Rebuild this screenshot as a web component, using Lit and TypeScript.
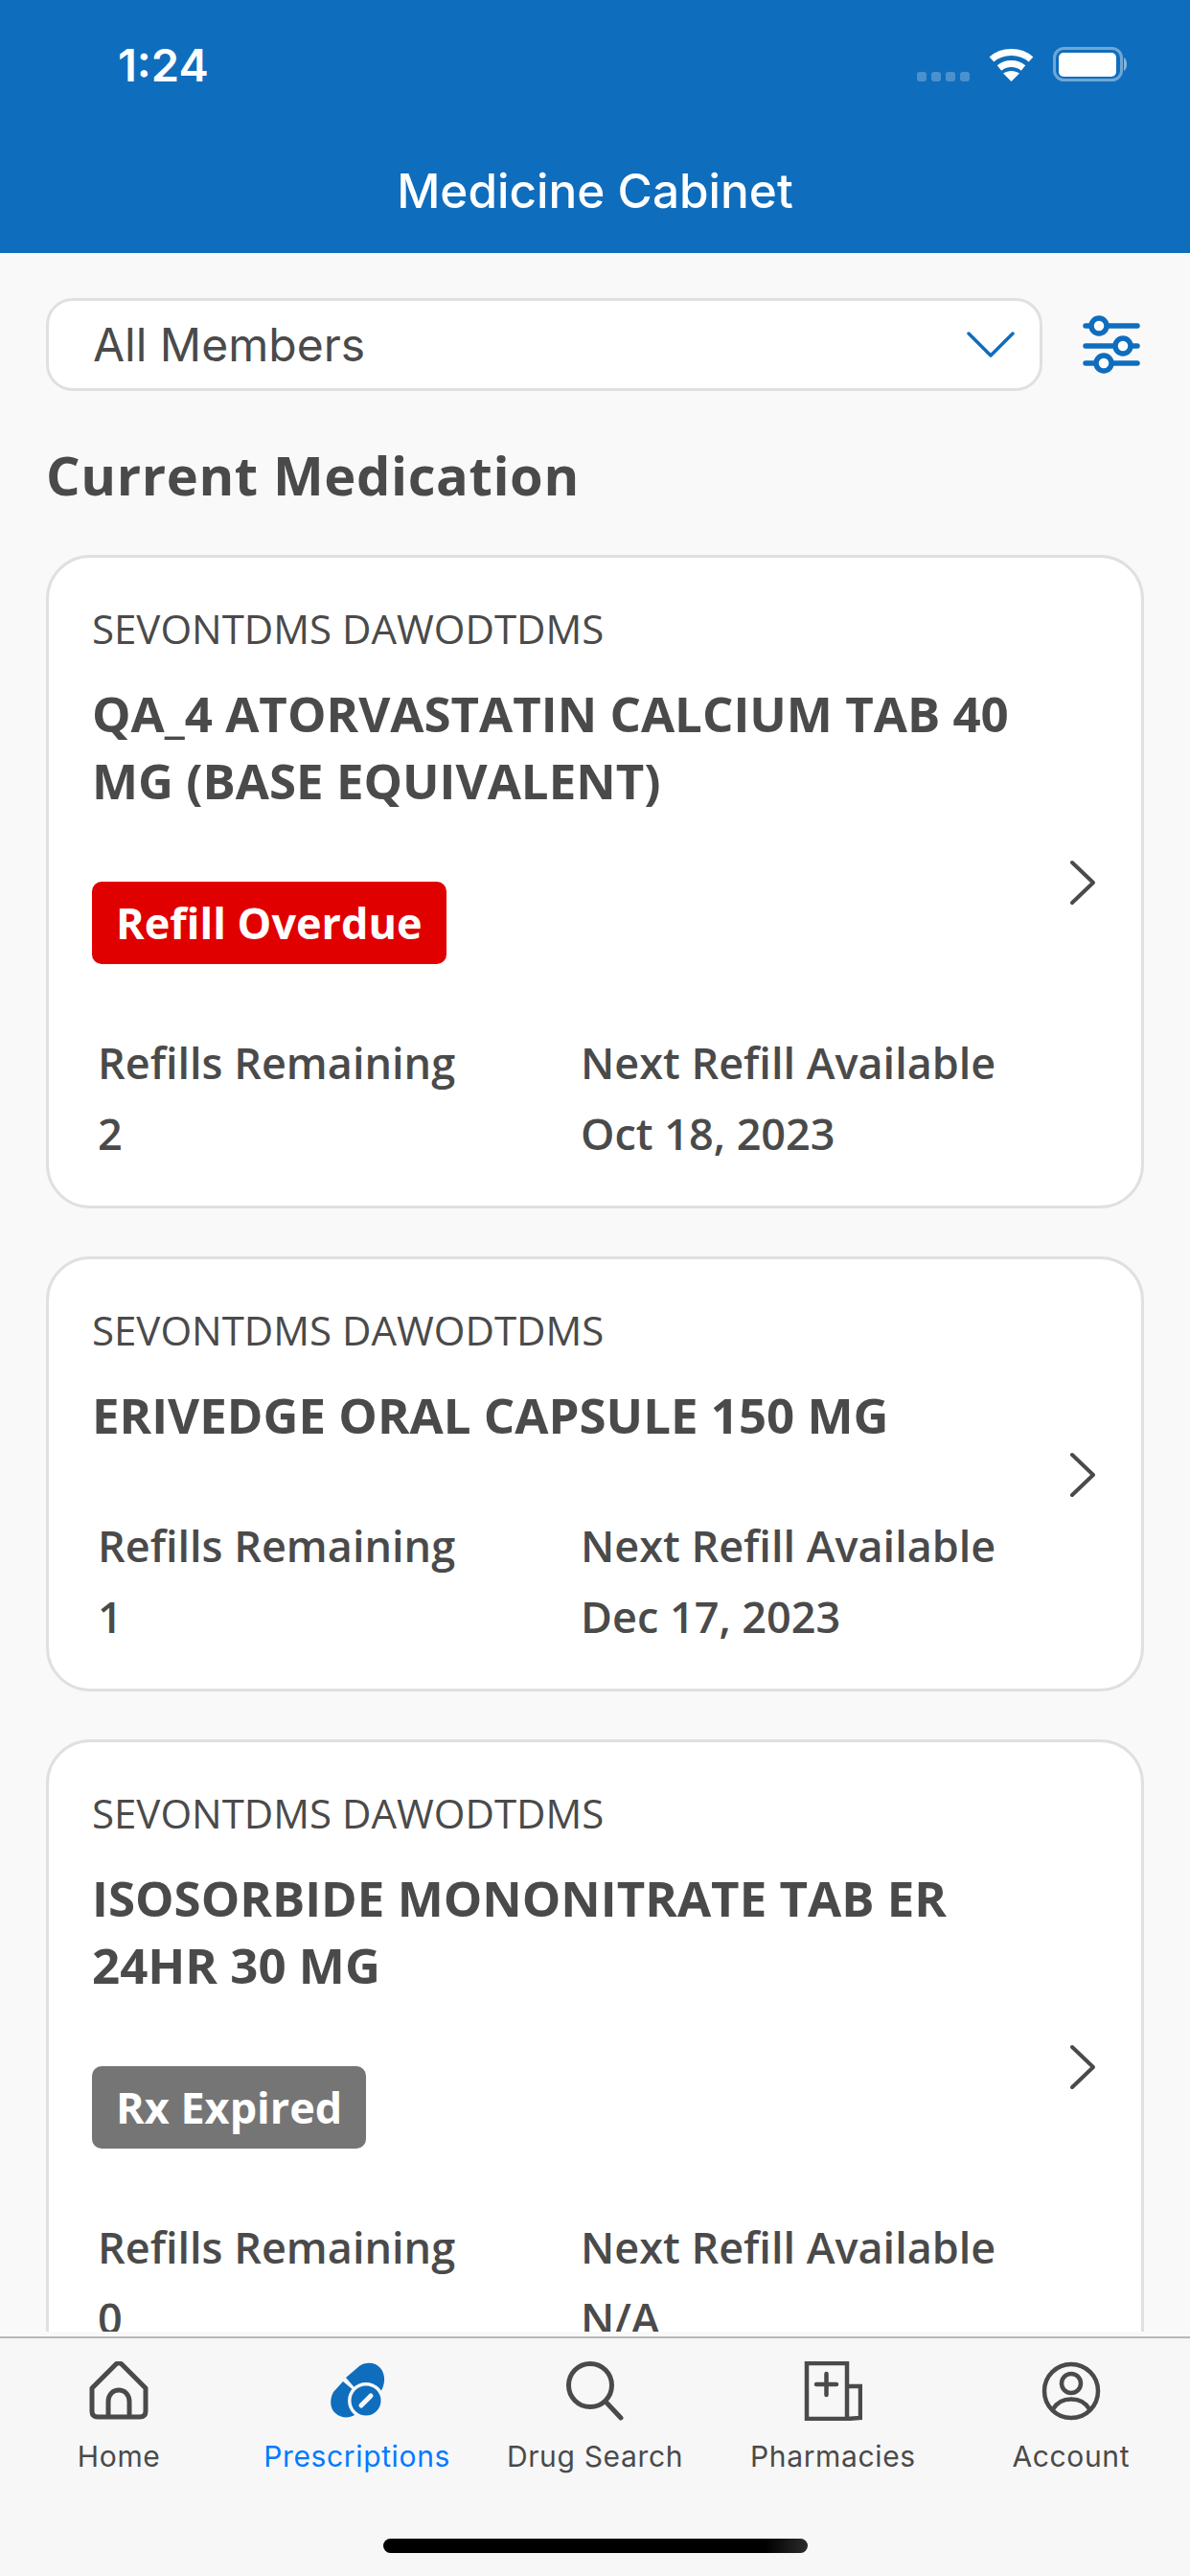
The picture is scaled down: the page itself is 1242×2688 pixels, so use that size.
import { LitElement, html, css, svg } from "lit";
import { customElement } from "lit/decorators.js";

interface Med { title: string[]; badge?: string; badgeKind?: string; refills: string; next: string; }

const meds: Med[] = [
  { title: ["QA_4 ATORVASTATIN CALCIUM TAB 40", "MG (BASE EQUIVALENT)"], badge: "Refill Overdue", badgeKind: "red", refills: "2", next: "Oct 18, 2023" },
  { title: ["ERIVEDGE ORAL CAPSULE 150 MG"], refills: "1", next: "Dec 17, 2023" },
  { title: ["ISOSORBIDE MONONITRATE TAB ER", "24HR 30 MG"], badge: "Rx Expired", badgeKind: "gray", refills: "0", next: "N/A" },
];

const tabs = [
  { label: "Home", active: false, icon: svg`<svg width="62" height="62" viewBox="0 0 62 62" fill="none" stroke="#4a4a4a" stroke-width="5" stroke-linejoin="round"><path d="M3 28 L28 3 Q31 0.5 34 3 L59 28 V52 Q59 58 53 58 H9 Q3 58 3 52 Z"/><path d="M20 58 V42 C20 26 42 26 42 42 V58"/></svg>` },
  { label: "Prescriptions", active: true, icon: svg`<svg width="62" height="62" viewBox="-3 -2 62 62"><path fill="#0f6dbd" d="M16 15 L30 3 C37 -2 47 -1 52 5 C58 12 57 23 52 30 L37 39 Z"/><path fill="#0f6dbd" d="M13 19 L3 30 C-1 37 -1 47 5 52 C10 57 19 58 25 54 L37 39 Z"/><circle cx="37" cy="39" r="19" fill="#f7f7f7"/><circle cx="37" cy="39" r="15.5" fill="#0f6dbd"/><path d="M32 44 L42 34" stroke="#f7f7f7" stroke-width="5" stroke-linecap="round"/></svg>` },
  { label: "Drug Search", active: false, icon: svg`<svg width="62" height="62" viewBox="0 0 62 62" fill="none" stroke="#4a4a4a" stroke-width="5" stroke-linecap="round"><circle cx="26" cy="25" r="22.5"/><path d="M42 42 L58 59"/></svg>` },
  { label: "Pharmacies", active: false, icon: svg`<svg width="62" height="62" viewBox="0 1 62 62" fill="none" stroke="#4a4a4a" stroke-width="4.5"><rect x="4" y="3" width="42" height="58"/><path d="M46 27 H60 V60 L46 61"/><path d="M14 25 H35 M24.5 14 V36" stroke-linecap="round"/></svg>` },
  { label: "Account", active: false, icon: svg`<svg width="62" height="62" viewBox="0 1 62 62" fill="none" stroke="#4a4a4a" stroke-width="4.5"><circle cx="31" cy="32" r="28"/><circle cx="31" cy="24" r="10"/><path d="M12 51 C20 37 42 37 50 51"/></svg>` },
];

@customElement("app-root")
export class AppRoot extends LitElement {
  static styles = css`
    :host { display: flex; flex-direction: column; width: 1242px; height: 2688px; background: #f9f9f9; overflow: hidden; font-family: "Open Sans", sans-serif; color: #4a4a4a; }
    header { height: 264px; background: #0f6dbd; color: #fff; display: flex; flex-direction: column; font-family: Inter, sans-serif; flex: none; }
    .status { height: 169px; display: flex; align-items: flex-start; justify-content: space-between; padding: 44px 64px 0 123px; box-sizing: border-box; }
    .time { font-size: 47px; font-weight: 600; line-height: 48px; }
    .sys { display: flex; align-items: flex-end; padding-top: 5px; }
    .dots { display: flex; gap: 5px; margin-right: 20px; }
    .dots i { width: 10px; height: 10px; border-radius: 3px; background: rgba(255,255,255,.25); }
    .sys svg { display: block; }
    .battery { margin-left: 20px; }
    .title { text-align: center; font-size: 49.5px; font-weight: 500; line-height: 60px; }
    main { flex: 1; min-height: 0; margin-bottom: 5px; overflow: hidden; padding: 47px 48px 0; }
    .filters { display: flex; align-items: center; justify-content: space-between; }
    .select { width: 1040px; height: 97px; box-sizing: border-box; border: 3px solid #e0e0e0; border-radius: 28px; background: #fff; display: flex; align-items: center; justify-content: space-between; padding: 0 26px 0 46px; font-family: Inter, sans-serif; font-size: 48px; color: #4a4a4a; }
    .select svg, .tune { display: block; }
    .tune { margin-right: 4px; }
    h1 { margin: 52px 0 49px; font-size: 56px; line-height: 70px; font-weight: 700; letter-spacing: .6px; }
    .card { width: 1146px; box-sizing: border-box; border: 3px solid #e0e0e0; border-radius: 46px; background: #fff; display: flex; align-items: center; margin-bottom: 50px; padding: 47px 45px 38px 45px; }
    .body { flex: 1; min-width: 0; }
    .name { font-size: 42px; line-height: 54px; font-weight: 400; }
    .med { margin: 26px 0 0; font-size: 51px; line-height: 70px; font-weight: 700; white-space: nowrap; }
    .badge { display: inline-block; margin-top: 71px; height: 86px; line-height: 86px; padding: 0 25px; border-radius: 10px; color: #fff; font-size: 45px; font-weight: 700; }
    .badge.red { background: #e00000; }
    .badge.gray { background: #757575; }
    .stats { display: grid; grid-template-columns: 504px 1fr; margin: 65px 0 0 6px; font-size: 45px; line-height: 74px; font-weight: 600; }
    .badge + .stats { margin-top: 66px; }
    .chev { flex: none; display: block; margin-bottom: 8px; }
    nav { flex: none; height: 250px; box-sizing: border-box; border-top: 2px solid #b8b8b8; background: #f7f7f7; display: flex; flex-direction: column; align-items: center; }
    .tabs { display: grid; grid-template-columns: repeat(5, 1fr); width: 100%; padding-top: 24px; }
    .tab { display: flex; flex-direction: column; align-items: center; font-family: Inter, sans-serif; font-size: 30px; line-height: 40px; color: #4a4a4a; letter-spacing: .65px; }
    .tab svg { display: block; margin-bottom: 17px; }
    .tab.active { color: #007aff; }
    .homebar { width: 443px; height: 15px; border-radius: 8px; background: linear-gradient(90deg, #000 90%, #2c2c2c); margin-top: 66px; }
  `;

  render() {
    return html`
      <header>
        <div class="status">
          <span class="time">1:24</span>
          <div class="sys">
            <div class="dots"><i></i><i></i><i></i><i></i></div>
            <svg width="47" height="36" viewBox="0 0 47 36" fill="none" stroke="#fff" stroke-width="7"><path d="M3 13 C14 3 33 3 44 13"/><path d="M11 22 C18 16 29 16 36 22"/><path d="M23.5 36 L15 27.5 C20 24 27 24 32 27.5 Z" fill="#fff" stroke="none"/></svg>
            <svg class="battery" width="79" height="36" viewBox="0 0 79 36"><rect x="1.5" y="1.5" width="70" height="33" rx="10" fill="none" stroke="#fff" stroke-opacity=".4" stroke-width="3"/><rect x="6" y="6" width="60" height="25" rx="5" fill="#fff"/><path d="M74 11 C78 13 78 23 74 25 Z" fill="#fff" fill-opacity=".5"/></svg>
          </div>
        </div>
        <div class="title">Medicine Cabinet</div>
      </header>
      <main>
        <div class="filters">
          <div class="select">
            <span>All Members</span>
            <svg width="50" height="28" viewBox="0 0 50 28" fill="none" stroke="#0f6dbd" stroke-width="3.5" stroke-linecap="round" stroke-linejoin="round"><path d="M2 2 L25 25 L48 2"/></svg>
          </div>
          <svg class="tune" width="60" height="62" viewBox="0 0 60 62" fill="none" stroke="#0f6dbd" stroke-width="5.5" stroke-linecap="round"><path d="M3 11 H57 M3 32 H57 M3 50 H57"/><circle cx="17" cy="11" r="8" fill="#fff"/><circle cx="42" cy="32" r="8" fill="#fff"/><circle cx="22" cy="50" r="8" fill="#fff"/></svg>
        </div>
        <h1>Current Medication</h1>
        ${meds.map((m) => html`
          <div class="card">
            <div class="body">
              <div class="name">SEVONTDMS DAWODTDMS</div>
              <h2 class="med">${m.title.map((t) => html`<div>${t}</div>`)}</h2>
              ${m.badge ? html`<div class="badge ${m.badgeKind}">${m.badge}</div>` : ""}
              <div class="stats">
                <span>Refills Remaining</span><span>Next Refill Available</span>
                <span>${m.refills}</span><span>${m.next}</span>
              </div>
            </div>
            <svg class="chev" width="32" height="48" viewBox="0 0 32 48" fill="none" stroke="#4a4a4a" stroke-width="4" stroke-linecap="round" stroke-linejoin="round"><path d="M5 3 L27 24 L5 45"/></svg>
          </div>
        `)}
      </main>
      <nav>
        <div class="tabs">
          ${tabs.map((t) => html`<div class="tab ${t.active ? "active" : ""}">${t.icon}<span>${t.label}</span></div>`)}
        </div>
        <div class="homebar"></div>
      </nav>
    `;
  }
}
